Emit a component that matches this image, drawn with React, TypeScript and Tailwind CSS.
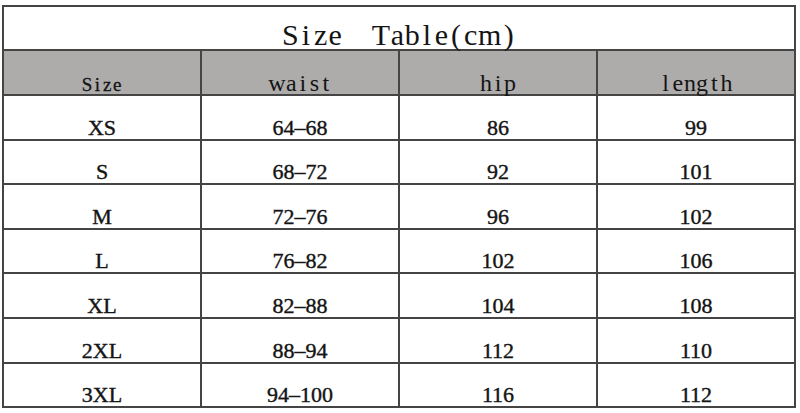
const rows = [
  ["XS", "64–68", "86", "99"],
  ["S", "68–72", "92", "101"],
  ["M", "72–76", "96", "102"],
  ["L", "76–82", "102", "106"],
  ["XL", "82–88", "104", "108"],
  ["2XL", "88–94", "112", "110"],
  ["3XL", "94–100", "116", "112"],
];

const heads = [
  { label: "waist", cw: "min-w-[11.5px]" },
  { label: "hip", cw: "min-w-[12px]" },
  { label: "length", cw: "min-w-[12.2px]" },
];

// fixed-pitch letters, the source uses a monospaced serif
function Mono({ text, cw }: { text: string; cw: string }) {
  return (
    <>
      {text.split("").map((ch, i) => (
        <span key={i} className={`inline-block text-center ${cw}`}>
          {ch === " " ? "\u00a0" : ch}
        </span>
      ))}
    </>
  );
}

export default function App() {
  return (
    <div className="w-[800px] h-[413px] bg-white pl-[2px] pt-[5px] font-['Liberation_Serif',serif] text-[#141414]">
      <table className="w-[794px] table-fixed border-collapse">
        <tbody>
          <tr className="h-[44px]">
            <td colSpan={4} className="border-2 border-[#444] text-center align-bottom text-[30px] leading-[28px]">
              <Mono text="Size  Table(cm)" cw="min-w-[14.6px]" />
            </td>
          </tr>
          <tr className="h-[45px] bg-[#aeabab]">
            <td className="border-2 border-[#444] text-center align-bottom text-[19px] leading-[18px] [-webkit-text-stroke:0.3px]">
              <Mono text="Size" cw="min-w-[10px]" />
            </td>
            {heads.map((h) => (
              <td key={h.label} className="border-2 border-[#444] text-center align-bottom text-[24px] leading-[22px]">
                <Mono text={h.label} cw={h.cw} />
              </td>
            ))}
          </tr>
          {rows.map((r) => (
            <tr key={r[0]} className="h-[44.6px]">
              {r.map((c, i) => (
                <td
                  key={i}
                  className="border-2 border-[#444] text-center align-bottom text-[22px] leading-[22px] [-webkit-text-stroke:0.4px]"
                >
                  {c}
                </td>
              ))}
            </tr>
          ))}
        </tbody>
      </table>
    </div>
  );
}
